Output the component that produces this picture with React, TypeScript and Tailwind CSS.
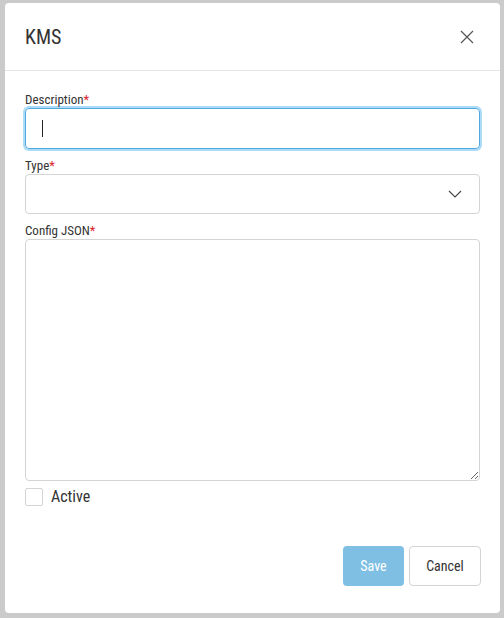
import React, { useState } from 'react';

const font = { fontFamily: '"Roboto Condensed", "Liberation Sans Narrow", "Arial Narrow", Roboto, sans-serif' };

const Label = ({ text }: { text: string }) => (
  <label className="block text-[13px] leading-[15px] text-[#333] mb-[1px]">
    {text}
    <span className="text-[#d9232d]">*</span>
  </label>
);

const KmsModal = () => {
  const [active, setActive] = useState(false);

  return (
    <div className="w-[504px] h-[618px] bg-[#cbcbcb] pt-[3px] pl-[5px]" style={font}>
      <div className="w-[495px] h-[610px] bg-white rounded-[4px] flex flex-col">
        {/* Header */}
        <div className="h-[68px] flex items-center justify-between pl-[20px] pr-[26px] border-b border-[#e5e5e5]">
          <h1 className="text-[20px] text-[#333] font-normal">KMS</h1>
          <button className="text-[#555]">
            <svg width="14" height="14" viewBox="0 0 14 14" fill="none" stroke="currentColor" strokeWidth="1.2">
              <path d="M1 1L13 13M13 1L1 13" />
            </svg>
          </button>
        </div>

        {/* Body */}
        <div className="px-[20px] pt-[21px] flex-1">
          <Label text="Description" />
          <div className="h-[41px] rounded-[4px] border border-[#4fa9de] shadow-[0_0_0_2px_rgba(102,190,238,0.55)] flex items-center pl-[16px]">
            <span className="w-px h-[17px] bg-[#222]" />
          </div>

          <div className="mt-[9px]">
            <Label text="Type" />
            <div className="h-[40px] rounded-[4px] border border-[#d4d4d4] flex items-center justify-end pr-[17px] text-[#444]">
              <svg width="14" height="8" viewBox="0 0 14 8" fill="none" stroke="currentColor" strokeWidth="1.1">
                <path d="M1 1L7 7L13 1" />
              </svg>
            </div>
          </div>

          <div className="mt-[9px]">
            <Label text="Config JSON" />
            <textarea className="block w-full h-[242px] rounded-[4px] border border-[#d4d4d4] outline-none resize-y" />
          </div>

          <label className="mt-[4px] flex items-center gap-[8px] cursor-pointer">
            <span
              onClick={() => setActive(!active)}
              className="w-[18px] h-[18px] rounded-[2px] border border-[#d4d4d4] bg-white flex items-center justify-center text-[12px]"
            >
              {active ? '✓' : ''}
            </span>
            <span className="text-[16px] leading-[24px] text-[#333]">Active</span>
          </label>
        </div>

        {/* Footer */}
        <div className="flex justify-end gap-[5px] pr-[19px] pb-[27px]">
          <button className="w-[61px] h-[40px] rounded-[4px] bg-[#7fbfe3] text-white text-[14px]">Save</button>
          <button className="w-[72px] h-[40px] rounded-[4px] border border-[#d4d4d4] bg-white text-[#333] text-[14px]">
            Cancel
          </button>
        </div>
      </div>
    </div>
  );
};

export default function App() {
  return <KmsModal />;
}
